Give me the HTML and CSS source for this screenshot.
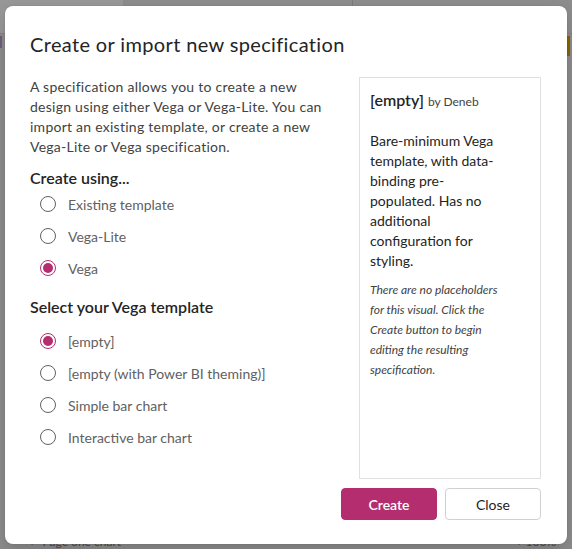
FILE: index.html
```html
<!DOCTYPE html>
<html lang="en">
<head>
<meta charset="utf-8">
<title>Create or import new specification</title>
<link rel="stylesheet" href="styles.css">
</head>
<body>
<div class="app">
  <div class="app-top">
    <div class="app-tab"></div>
    <div class="app-sep"></div>
  </div>
  <div class="app-mid">
    <div class="app-left-mark"></div>
    <div class="app-right-mark"></div>
  </div>
  <div class="app-bottom">
    <span class="app-page">‹ &nbsp; Page one chart</span>
    <span class="app-zoom">— + 100%</span>
  </div>
</div>

<div class="overlay">
  <div class="dialog" role="dialog" aria-labelledby="dlg-title">
    <h1 class="dialog-title" id="dlg-title">Create or import new specification</h1>
    <div class="dialog-body">
      <div class="main-col">
        <p class="intro">A specification allows you to create a new design using either Vega or Vega-Lite. You can import an existing template, or create a new Vega-Lite or Vega specification.</p>
        <h2 class="group-label first">Create using...</h2>
        <div class="radio-group">
          <label class="radio"><input type="radio" name="mode"><span>Existing template</span></label>
          <label class="radio"><input type="radio" name="mode"><span>Vega-Lite</span></label>
          <label class="radio"><input type="radio" name="mode" checked><span>Vega</span></label>
        </div>
        <h2 class="group-label second">Select your Vega template</h2>
        <div class="radio-group">
          <label class="radio"><input type="radio" name="tpl" checked><span>[empty]</span></label>
          <label class="radio"><input type="radio" name="tpl"><span>[empty (with Power BI theming)]</span></label>
          <label class="radio"><input type="radio" name="tpl"><span>Simple bar chart</span></label>
          <label class="radio"><input type="radio" name="tpl"><span>Interactive bar chart</span></label>
        </div>
      </div>
      <aside class="preview">
        <div class="preview-title"><span class="tpl-name">[empty]</span> <span class="tpl-by">by Deneb</span></div>
        <p class="preview-desc">Bare-minimum Vega template, with data-binding pre-populated. Has no additional configuration for styling.</p>
        <p class="preview-note">There are no placeholders for this visual. Click the Create button to begin editing the resulting specification.</p>
      </aside>
    </div>
    <div class="dialog-actions">
      <button class="btn btn-primary" type="button">Create</button>
      <button class="btn btn-secondary" type="button">Close</button>
    </div>
  </div>
</div>
</body>
</html>
```

FILE: styles.css
```css
* { box-sizing: border-box; }

html, body {
  margin: 0;
  padding: 0;
  width: 572px;
  height: 549px;
  overflow: hidden;
}

body {
  font-family: "Lato", "Noto Sans", "Liberation Sans", sans-serif;
  background: #8c8c8c;
  position: relative;
  color: #242424;
}

/* dimmed app behind the modal */
.app {
  height: 549px;
  display: flex;
  flex-direction: column;
}
.app-top {
  height: 34px;
  display: flex;
  border-bottom: 1px solid #858585;
}
.app-tab {
  width: 124px;
  background: #979797;
  border-right: 1px solid #8a8a8a;
}
.app-sep {
  margin-left: 228px;
  width: 1px;
  height: 8px;
  background: #7b7b7b;
}
.app-mid {
  flex: 1;
  display: flex;
  justify-content: space-between;
  padding-top: 2px;
}
.app-left-mark {
  width: 2px;
  height: 12px;
  background: #6d5f78;
}
.app-right-mark {
  width: 3px;
  height: 20px;
  background: #8a6500;
  margin-right: 2px;
}
.app-bottom {
  height: 14px;
  display: flex;
  justify-content: space-between;
  align-items: flex-end;
  font-size: 12px;
  color: #4a4a4a;
  padding: 0 16px 0 30px;
}

/* modal */
.overlay {
  position: absolute;
  inset: 0;
}
.dialog {
  position: absolute;
  left: 5px;
  top: 6px;
  width: 562px;
  height: 538px;
  background: #ffffff;
  border-radius: 8px;
  box-shadow: 0 0 2px rgba(0,0,0,0.12), 0 8px 16px rgba(0,0,0,0.14);
  padding: 24px 26px 24px 25px;
  display: flex;
  flex-direction: column;
}

.dialog-title {
  margin: 0 0 19px;
  font-size: 20px;
  line-height: 28px;
  font-weight: 400;
  letter-spacing: 0.018em;
  color: #242424;
}

.dialog-body {
  display: grid;
  grid-template-columns: 1fr 182px;
  column-gap: 18px;
  height: 402px;
}

.intro {
  margin: 0;
  font-size: 14px;
  line-height: 20px;
  letter-spacing: 0.018em;
  color: #424242;
  width: 305px;
}

.group-label {
  font-size: 16px;
  line-height: 22px;
  font-weight: 600;
  color: #242424;
}
.group-label.first {
  margin: 10px 0 -1px;
}
.group-label.second {
  margin: 12px 0 7px;
}

.radio-group {
  display: flex;
  flex-direction: column;
}
.radio {
  height: 32px;
  display: flex;
  align-items: center;
  gap: 12px;
  padding-left: 10px;
  font-size: 14px;
  color: #616161;
  cursor: pointer;
}
.radio input {
  appearance: none;
  -webkit-appearance: none;
  margin: 0;
  width: 16px;
  height: 16px;
  flex: none;
  border: 1px solid #616161;
  border-radius: 50%;
  display: grid;
  place-items: center;
  background: #fff;
}
.radio input:checked {
  border-color: #b42e6f;
}
.radio input:checked::after {
  content: "";
  width: 10px;
  height: 10px;
  border-radius: 50%;
  background: #b42e6f;
}

.preview {
  border: 1px solid #e0e0e0;
  padding: 11px 38px 10px 10px;
}
.preview-title {
  line-height: 22px;
  color: #242424;
  white-space: nowrap;
}
.tpl-name {
  font-size: 16px;
  font-weight: 600;
}
.tpl-by {
  font-size: 12px;
  color: #424242;
}
.preview-desc {
  margin: 18px 0 0;
  font-size: 14px;
  line-height: 20px;
  color: #242424;
}
.preview-note {
  margin: 9px 0 0;
  font-size: 12px;
  line-height: 20px;
  font-style: italic;
  color: #424242;
}

.dialog-actions {
  margin-top: 9px;
  display: flex;
  justify-content: flex-end;
  gap: 8px;
}
.btn {
  width: 96px;
  height: 32px;
  border-radius: 4px;
  font-family: inherit;
  font-size: 14px;
  cursor: pointer;
}
.btn-primary {
  background: #b42e6f;
  border: 1px solid #b42e6f;
  color: #ffffff;
  font-weight: 600;
}
.btn-secondary {
  background: #ffffff;
  border: 1px solid #d1d1d1;
  color: #242424;
  font-weight: 400;
}
```
